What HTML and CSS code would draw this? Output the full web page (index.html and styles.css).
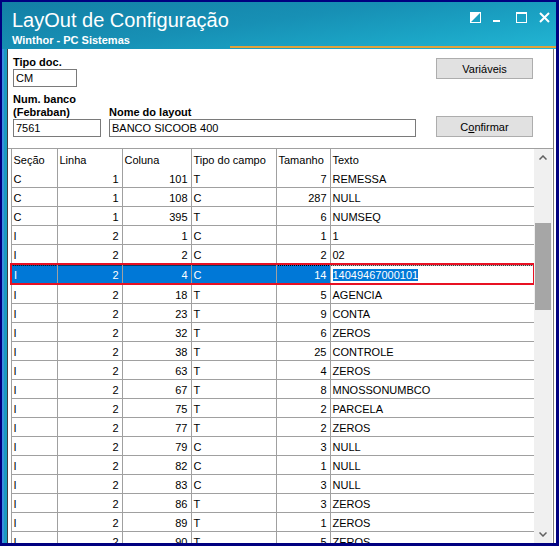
FILE: index.html
```html
<!DOCTYPE html>
<html lang="pt-BR">
<head>
  <meta charset="UTF-8">
  <title>LayOut de Configuração</title>
  <link rel="stylesheet" href="styles.css">
</head>
<body>

<div class="window">
  <!-- barra de título -->
  <div class="titlebar">
    <div class="titlebar-top">
      <div class="caption">
        <div class="caption-title">LayOut de Configuração</div>
        <div class="caption-sub">Winthor - PC Sistemas</div>
      </div>
      <div class="controls">
        <svg width="11" height="11" viewBox="0 0 11 11"><rect x="0.5" y="0.5" width="10" height="10" fill="none" stroke="#fff"/><polygon points="0,0 11,0 0,11" fill="#fff"/></svg>
        <svg width="11" height="11" viewBox="0 0 11 11"><rect x="0" y="8" width="7" height="2" fill="#fff"/></svg>
        <svg width="11" height="11" viewBox="0 0 11 11"><rect x="0.5" y="1.5" width="10" height="9" fill="none" stroke="#fff"/><rect x="0" y="0" width="11" height="2" fill="#fff"/></svg>
        <svg width="11" height="11" viewBox="0 0 11 11"><path d="M1 1 L10 10 M10 1 L1 10" stroke="#fff" stroke-width="2"/></svg>
      </div>
    </div>
    <div class="titlebar-line"></div>
  </div>

  <div class="frame">
    <div class="frame-edge"></div>
    <div class="content">

      <!-- cabeçalho do layout -->
      <div class="form">
        <div class="fields">
          <label class="lbl">Tipo doc.</label>
          <input class="txt w-tipo" value="CM">
          <div class="field-row">
            <div class="field">
              <label class="lbl">Num. banco<br>(Febraban)</label>
              <input class="txt w-banco" value="7561">
            </div>
            <div class="field">
              <label class="lbl">Nome do layout</label>
              <input class="txt w-nome" value="BANCO SICOOB 400">
            </div>
          </div>
        </div>
        <div class="buttons">
          <button class="btn">Variáveis</button>
          <button class="btn btn-confirm">C<u>o</u>nfirmar</button>
        </div>
      </div>

      <!-- grade de campos -->
      <div class="grid-wrap">
        <div class="grid-area">
          <table class="grid">
            <colgroup>
              <col style="width:46px"><col style="width:65px"><col style="width:69px">
              <col style="width:85px"><col style="width:54px"><col style="width:204px">
            </colgroup>
            <thead>
              <tr>
                <th>Seção</th>
                <th>Linha</th>
                <th>Coluna</th>
                <th>Tipo do campo</th>
                <th>Tamanho</th>
                <th>Texto</th>
              </tr>
            </thead>
            <tbody id="layout-rows"></tbody>
          </table>
        </div>
        <div class="scrollbar">
          <div class="sb-btn">
            <svg width="8" height="5" viewBox="0 0 8 5"><path d="M0.5 4.5 L4 1 L7.5 4.5" fill="none" stroke="#606060" stroke-width="1.5"/></svg>
          </div>
          <div class="sb-gap"></div>
          <div class="sb-thumb"></div>
          <div class="sb-rest"></div>
          <div class="sb-btn">
            <svg width="8" height="5" viewBox="0 0 8 5"><path d="M0.5 0.5 L4 4 L7.5 0.5" fill="none" stroke="#606060" stroke-width="1.5"/></svg>
          </div>
        </div>
      </div>

    </div>
  </div>
</div>

<script>
  const rows = [
    ["C", 1, 101, "T", 7, "REMESSA"],
    ["C", 1, 108, "C", 287, "NULL"],
    ["C", 1, 395, "T", 6, "NUMSEQ"],
    ["I", 2, 1, "C", 1, "1"],
    ["I", 2, 2, "C", 2, "02"],
    ["I", 2, 4, "C", 14, "14049467000101"],
    ["I", 2, 18, "T", 5, "AGENCIA"],
    ["I", 2, 23, "T", 9, "CONTA"],
    ["I", 2, 32, "T", 6, "ZEROS"],
    ["I", 2, 38, "T", 25, "CONTROLE"],
    ["I", 2, 63, "T", 4, "ZEROS"],
    ["I", 2, 67, "T", 8, "MNOSSONUMBCO"],
    ["I", 2, 75, "T", 2, "PARCELA"],
    ["I", 2, 77, "T", 2, "ZEROS"],
    ["I", 2, 79, "C", 3, "NULL"],
    ["I", 2, 82, "C", 1, "NULL"],
    ["I", 2, 83, "C", 3, "NULL"],
    ["I", 2, 86, "T", 3, "ZEROS"],
    ["I", 2, 89, "T", 1, "ZEROS"],
    ["I", 2, 90, "T", 5, "ZEROS"]
  ];
  const selected = 5;

  const tbody = document.getElementById("layout-rows");
  rows.forEach((r, i) => {
    const tr = document.createElement("tr");
    if (i === selected) tr.className = "selected";
    // linha em edição mostra o texto destacado
    const texto = i === selected ? `<span class="edit">${r[5]}</span>` : r[5];
    tr.innerHTML = `
      <td>${r[0]}</td>
      <td class="num">${r[1]}</td>
      <td class="num">${r[2]}</td>
      <td>${r[3]}</td>
      <td class="num">${r[4]}</td>
      <td>${texto}</td>
    `;
    tbody.appendChild(tr);
  });
</script>
</body>
</html>
```

FILE: styles.css
```css
body { margin: 0; font-family: "Liberation Sans", Arial, sans-serif; font-size: 11px; }

.window {
  width: 559px;
  height: 546px;
  box-sizing: border-box;
  border-style: solid;
  border-color: #000080;
  border-width: 2px 3px 3px 2px;
  display: flex;
  flex-direction: column;
  overflow: hidden;
}

/* barra de título */
.titlebar {
  height: 47px;
  flex: none;
  display: flex;
  flex-direction: column;
  background: linear-gradient(172deg, #137fa5 0%, #1790b5 45%, #1ba5c6 75%, #23b6d4 100%);
  color: #fff;
}
.titlebar-top { display: flex; justify-content: space-between; height: 44px; }
.caption { padding: 7px 0 0 10px; }
.caption-title { font-size: 20px; line-height: 22px; }
.caption-sub { font-weight: bold; font-size: 11px; line-height: 11px; margin-top: 4px; }
.controls { display: flex; gap: 12px; padding: 10px 6px 0 0; }
.controls svg { display: block; }
.titlebar-line { height: 2px; margin-left: 228px; background: #e0a23c; }

.frame { flex: 1; display: flex; background: #fff; padding-right: 2px; min-height: 0; }
.frame-edge { width: 5px; flex: none; background: linear-gradient(to right, #3a8fe0 0 2px, #1a9cc0 2px); }
.content {
  flex: 1;
  min-width: 0;
  display: flex;
  flex-direction: column;
  border-left: 1px solid #3c3c3c;
  border-right: 1px solid #7a7a7a;
}

/* formulário */
.form {
  height: 100px;
  flex: none;
  box-sizing: border-box;
  border-bottom: 1px solid #a0a0a0;
  display: flex;
  justify-content: space-between;
  padding: 7px 20px 0 5px;
}
.lbl { display: block; font-weight: bold; line-height: 13px; color: #000; }
.txt {
  display: block;
  box-sizing: border-box;
  height: 18px;
  margin: 0;
  padding: 0 2px;
  border: 1px solid #7a7a7a;
  font-family: "Liberation Sans", Arial, sans-serif;
  font-size: 11px;
  color: #000;
  background: #fff;
}
.w-tipo { width: 64px; }
.w-banco { width: 88px; }
.w-nome { width: 307px; }
.field-row { display: flex; align-items: flex-end; gap: 8px; margin-top: 6px; }

.buttons { display: flex; flex-direction: column; padding-top: 2px; }
.btn {
  width: 97px;
  height: 21px;
  padding: 0;
  background: #e1e1e1;
  border: 1px solid #adadad;
  font-family: "Liberation Sans", Arial, sans-serif;
  font-size: 11px;
  color: #000;
}
.btn-confirm { margin-top: 37px; }

/* grade */
.grid-wrap { flex: 1; min-height: 0; display: flex; padding-left: 1px; overflow: hidden; }
.grid-area { width: 525px; flex: none; overflow: hidden; }
table.grid {
  width: 523px;
  table-layout: fixed;
  border-collapse: collapse;
  border-left: 1px solid #a0a0a0;
  margin-left: 1px;
}
.grid th, .grid td {
  border: 1px solid #a0a0a0;
  padding: 2px 3px 0 2px;
  line-height: 16px;
  white-space: nowrap;
  overflow: hidden;
  text-align: left;
  font-weight: normal;
  color: #000;
}
.grid th { border-top: none; border-bottom: hidden; padding: 3px 3px 1px 2px; }
.grid th:last-child { border-right: hidden; }
.grid td.num { text-align: right; }

.grid tr.selected td {
  background-color: #0078d7;
  color: #fff;
  border-top: 2px solid #e81123;
  border-bottom: 2px solid #e81123;
  background-image: linear-gradient(to right, #000 50%, transparent 50%);
  background-size: 2px 1px;
  background-repeat: repeat-x;
  background-position: top;
}
.grid tr.selected td:first-child { border-left: 2px solid #e81123; }
.grid tr.selected td:last-child { border-right: 2px solid #e81123; background-color: #fff; }
.edit { background: #0078d7; color: #fff; }

/* barra de rolagem */
.scrollbar { width: 18px; flex: none; background: #f0f0f0; display: flex; flex-direction: column; }
.sb-btn { height: 17px; flex: none; display: flex; align-items: center; justify-content: center; }
.sb-gap { height: 57px; flex: none; }
.sb-thumb { height: 87px; flex: none; margin: 0 1px 0 1px; background: #a6a6a6; }
.sb-rest { flex: 1; }
```
